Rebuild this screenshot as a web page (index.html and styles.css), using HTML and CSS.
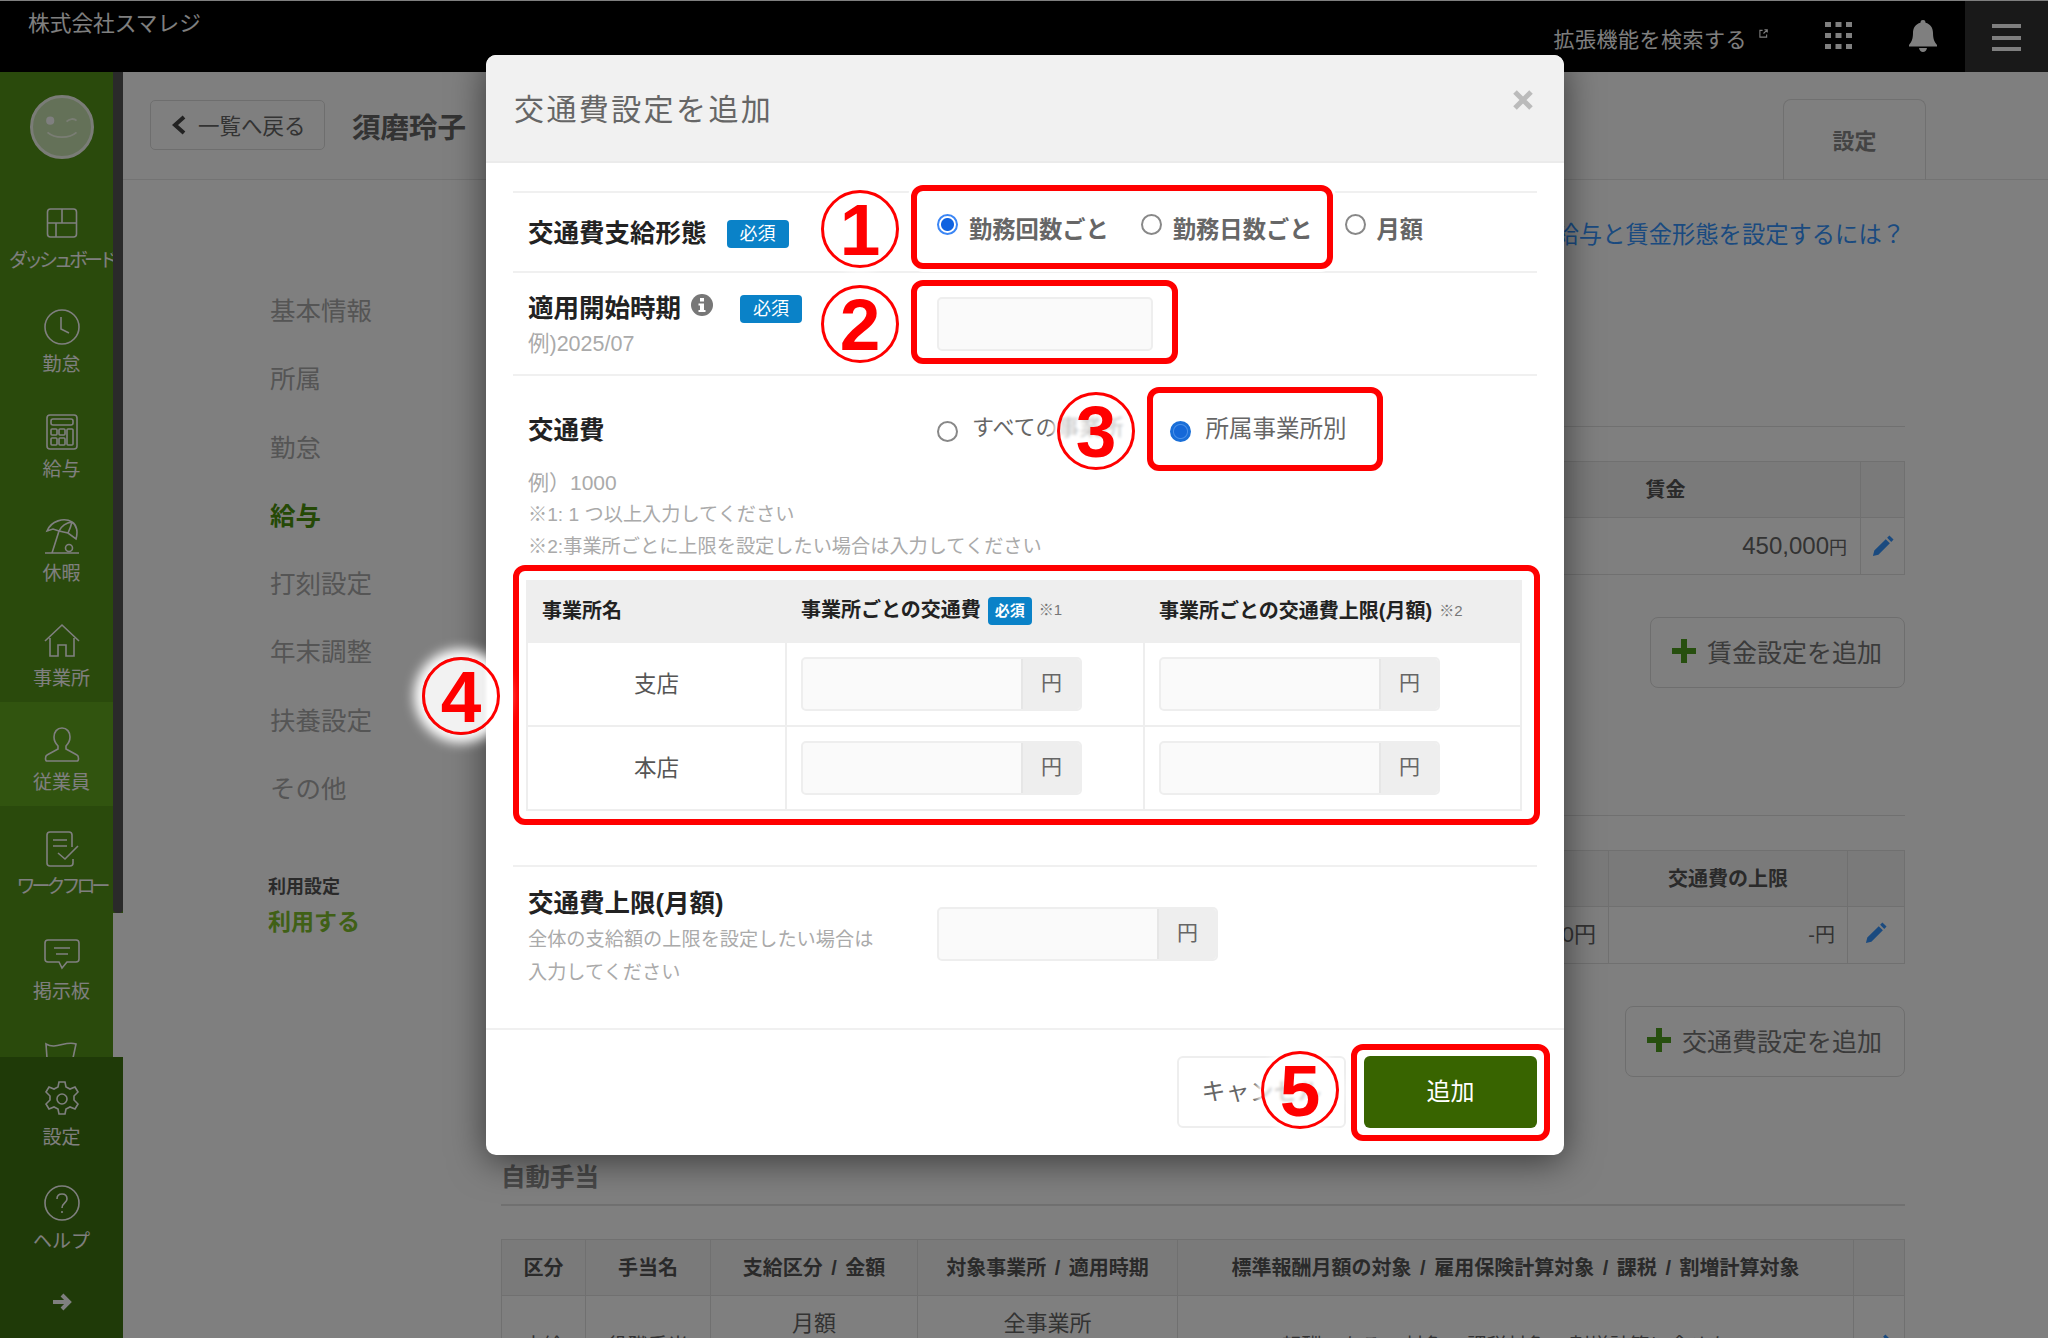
FILE: index.html
```html
<!DOCTYPE html>
<html lang="ja">
<head>
    <meta charset="UTF-8">
    <title>交通費設定を追加</title>
    <link rel="stylesheet" href="styles.css">
</head>
<body>
<div class="app">
    <header class="topbar">
        <div class="company">株式会社スマレジ</div>
        <div class="ext-search">拡張機能を検索する</div>
        <svg class="ext-icon" viewBox="0 0 10 10"><path d="M4 1.500H1v7.500h7.500V6M5 5l4-4M6 .8h3.200V4"/></svg>
        <svg class="grid-icon" viewBox="0 0 27 27"><rect x="0" y="0" width="6" height="5"/><rect x="10.500" y="0" width="6" height="5"/><rect x="21" y="0" width="6" height="5"/><rect x="0" y="11" width="6" height="5"/><rect x="10.500" y="11" width="6" height="5"/><rect x="21" y="11" width="6" height="5"/><rect x="0" y="22" width="6" height="5"/><rect x="10.500" y="22" width="6" height="5"/><rect x="21" y="22" width="6" height="5"/></svg>
        <svg class="bell-icon" viewBox="0 0 28 32"><path d="M14 0a2.500 2.500 0 0 1 2.500 2.800C21.500 4 24 8 24 13c0 6 1.500 9 4 12v1.500H0V25c2.500-3 4-6 4-12 0-5 2.500-9 7.500-10.200A2.500 2.500 0 0 1 14 0zM10 28h8c-.5 2.500-2 4-4 4s-3.500-1.500-4-4z"/></svg>
        <div class="menu-btn"><span></span><span></span><span></span></div>
    </header>

    <div class="main">
        <aside class="sidebar">
            <div class="side-top"><div class="avatar">
                <svg viewBox="0 0 64 64"><circle cx="19" cy="25" r="4.500"/><path class="line" d="M37 26c3-3 8-4 11-1M16 38c8 7 24 7 32 0"/></svg>
            </div></div>
            <nav class="side-nav">
                <a class="side-item">
                    <svg viewBox="0 0 36 36"><rect x="3.500" y="4" width="29" height="28" rx="3"/><path d="M3.500 18h29M18 4v14M12 18v14"/></svg>
                    <span class="tight">ダッシュボード</span>
                </a>
                <a class="side-item">
                    <svg viewBox="0 0 36 36"><circle cx="18" cy="18" r="17"/><path d="M17 8v12l8 4"/></svg>
                    <span>勤怠</span>
                </a>
                <a class="side-item">
                    <svg viewBox="0 0 36 36"><rect x="3" y="1" width="30" height="34" rx="3"/><rect x="7" y="5" width="22" height="6" rx="2"/><rect x="7" y="15" width="6" height="6" rx="1"/><rect x="15" y="15" width="6" height="6" rx="1"/><rect x="23" y="15" width="6" height="16" rx="1"/><rect x="7" y="24" width="6" height="7" rx="1"/><rect x="15" y="24" width="6" height="7" rx="1"/></svg>
                    <span>給与</span>
                </a>
                <a class="side-item">
                    <svg viewBox="0 0 36 36"><path d="M1 35h34M3 13C7 3 20-1 28 4c5 3 6 10 4 17l-8-6-9-2-6-2zM15 13l-7 22M24 15c2-4 3-7 4-11M15 13c2-4 6-8 13-9"/><circle cx="25" cy="30" r="3.500"/></svg>
                    <span>休暇</span>
                </a>
                <a class="side-item">
                    <svg viewBox="0 0 36 36"><path d="M1 18L18 2l17 16M6 15v18h8V22h8v11h8V15"/></svg>
                    <span>事業所</span>
                </a>
                <a class="side-item active">
                    <svg viewBox="0 0 36 36"><path d="M18 1c5 0 8 4 8 9 0 4-2 7-4 9v3l11 6c2 1 2 6 0 6H3c-2 0-2-5 0-6l11-6v-3c-2-2-4-5-4-9 0-5 3-9 8-9z"/></svg>
                    <span>従業員</span>
                </a>
                <a class="side-item">
                    <svg viewBox="0 0 36 36"><path d="M28 16V4a3 3 0 0 0-3-3H6a3 3 0 0 0-3 3v28a3 3 0 0 0 3 3h20a3 3 0 0 0 3-3v-4M9 9h14M9 15h14M14 22l7 6 13-13"/></svg>
                    <span class="tight">ワークフロー</span>
                </a>
                <a class="side-item">
                    <svg viewBox="0 0 36 36"><path d="M4 4h28a3 3 0 0 1 3 3v16a3 3 0 0 1-3 3H23l-5 6-3-6H4a3 3 0 0 1-3-3V7a3 3 0 0 1 3-3zM10 12h16M12 18h12"/></svg>
                    <span>掲示板</span>
                </a>
                <a class="side-item">
                    <svg viewBox="0 0 36 36"><path d="M2 4c10 6 20-4 30 0l-3 14 3 14c-10-4-20 6-28 0z"/></svg>
                </a>
            </nav>
            <div class="side-foot">
                <a class="side-item">
                    <svg viewBox="0 0 36 36"><path d="M15 1h6l1 5 4 2 5-2 3 5-4 4v4l4 4-3 5-5-2-4 2-1 5h-6l-1-5-4-2-5 2-3-5 4-4v-4l-4-4 3-5 5 2 4-2z"/><circle cx="18" cy="18" r="5"/></svg>
                    <span>設定</span>
                </a>
                <a class="side-item">
                    <svg viewBox="0 0 36 36"><circle cx="18" cy="18" r="17"/><path d="M13 14c0-3 2-5 5-5s5 2 5 5c0 4-5 4-5 9M18 26v2"/></svg>
                    <span>ヘルプ</span>
                </a>
                <div class="side-arrow">
                    <svg viewBox="0 0 20 20"><path d="M1 10h15M10 3l7 7-7 7"/></svg>
                </div>
            </div>
            <div class="side-scroll"></div>
        </aside>

        <div class="content">
            <div class="page-head">
                <a class="back-btn">
                    <svg viewBox="0 0 14 20"><path d="M12 2L3 10l9 8"/></svg>
                    一覧へ戻る
                </a>
                <h1 class="staff-name">須磨玲子</h1>
                <div class="page-tab">設定</div>
            </div>

            <div class="page-body">
                <div class="subnav">
                    <a class="subnav-item">基本情報</a>
                    <a class="subnav-item">所属</a>
                    <a class="subnav-item">勤怠</a>
                    <a class="subnav-item current">給与</a>
                    <a class="subnav-item">打刻設定</a>
                    <a class="subnav-item">年末調整</a>
                    <a class="subnav-item">扶養設定</a>
                    <a class="subnav-item">その他</a>
                    <div class="use-label">利用設定</div>
                    <div class="use-value">利用する</div>
                </div>

                <div class="panel">
                    <div class="help-link">給与と賃金形態を設定するには？</div>

                    <section class="block first">
                        <table class="data wage-table">
                            <colgroup><col><col class="col-wage"><col class="col-edit-44"></colgroup>
                            <thead><tr><th></th><th>賃金</th><th></th></tr></thead>
                            <tbody><tr>
                                <td></td>
                                <td class="num wage">450,000<small>円</small></td>
                                <td class="edit"><svg class="pencil" viewBox="0 0 24 24"><path d="M1 23l1.500-6L15 4.500l4.500 4.500L7 21.500zM16.500 3L19 .5 23.500 5 21 7.500z"/></svg></td>
                            </tr></tbody>
                        </table>
                        <div class="btn-row"><a class="add-btn wide-1"><span class="plus"></span>賃金設定を追加</a></div>
                    </section>

                    <section class="block">
                        <table class="data fee-table">
                            <colgroup><col><col class="col-limit"><col class="col-edit-56"></colgroup>
                            <thead><tr><th></th><th>交通費の上限</th><th></th></tr></thead>
                            <tbody><tr>
                                <td class="num fee-sum">0円</td>
                                <td class="num small-yen">-円</td>
                                <td class="edit"><svg class="pencil" viewBox="0 0 24 24"><path d="M1 23l1.500-6L15 4.500l4.500 4.500L7 21.500zM16.500 3L19 .5 23.500 5 21 7.500z"/></svg></td>
                            </tr></tbody>
                        </table>
                        <div class="btn-row"><a class="add-btn wide-2"><span class="plus"></span>交通費設定を追加</a></div>
                    </section>

                    <h2 class="block-title">自動手当</h2>
                    <table class="data allowance">
                        <colgroup><col class="a1"><col class="a2"><col class="a3"><col class="a4"><col><col class="a6"></colgroup>
                        <thead><tr>
                            <th>区分</th><th>手当名</th><th>支給区分 / 金額</th><th>対象事業所 / 適用時期</th>
                            <th>標準報酬月額の対象 / 雇用保険計算対象 / 課税 / 割増計算対象</th><th></th>
                        </tr></thead>
                        <tbody><tr>
                            <td>支給</td><td>役職手当</td>
                            <td class="top">月額</td><td class="top">全事業所</td>
                            <td>報酬である / 対象 / 課税対象 / 割増計算に含めない</td>
                            <td class="edit"><svg class="pencil" viewBox="0 0 24 24"><path d="M1 23l1.500-6L15 4.500l4.500 4.500L7 21.500zM16.500 3L19 .5 23.500 5 21 7.500z"/></svg></td>
                        </tr></tbody>
                    </table>
                </div>
            </div>
        </div>
    </div>

    <div class="backdrop"></div>

    <div class="modal">
        <div class="modal-head">
            <h3 class="modal-title">交通費設定を追加</h3>
            <svg class="modal-close" viewBox="0 0 22 22"><path d="M3 3l16 16M19 3L3 19"/></svg>
        </div>
        <div class="modal-body">
            <div class="form-row row-type">
                <div class="form-label"><span class="label-text">交通費支給形態</span><span class="req">必須</span></div>
                <div class="radios">
                    <input class="radio radio-on" type="radio"><label class="radio-text">勤務回数ごと</label>
                    <input class="radio" type="radio"><label class="radio-text">勤務日数ごと</label>
                    <input class="radio" type="radio"><label class="radio-text">月額</label>
                </div>
            </div>
            <div class="form-row row-start">
                <div class="form-label stacked">
                    <div class="label-line">
                        <span class="label-text">適用開始時期</span>
                        <svg class="info-icon" viewBox="0 0 22 22"><circle cx="11" cy="11" r="11"/><rect x="9" y="4" width="4" height="3.500" fill="#fff"/><path d="M7.500 9.500H13V16h1.500v2h-7v-2H9v-4.500H7.500z" fill="#fff"/></svg>
                        <span class="req">必須</span>
                    </div>
                    <div class="hint">例)2025/07</div>
                </div>
                <input class="text-input month" type="text">
            </div>
            <div class="form-row row-fee">
                <div class="fee-top">
                    <div class="form-label"><span class="label-text">交通費</span></div>
                    <input class="radio fee-radio" type="radio"><label class="plain-text">すべての事業所</label>
                    <input class="radio radio-fill fee-radio" type="radio"><label class="plain-text">所属事業所別</label>
                </div>
                <div class="notes">
                    <p class="note-eg">例）1000</p>
                    <p>※1: 1 つ以上入力してください</p>
                    <p>※2:事業所ごとに上限を設定したい場合は入力してください</p>
                </div>
                <table class="office-table">
                    <colgroup><col class="o1"><col class="o2"><col></colgroup>
                    <thead><tr>
                        <th>事業所名</th>
                        <th>事業所ごとの交通費<span class="req mini">必須</span><span class="mark">※1</span></th>
                        <th>事業所ごとの交通費上限(月額)<span class="mark spaced">※2</span></th>
                    </tr></thead>
                    <tbody>
                        <tr>
                            <td class="office">支店</td>
                            <td><div class="yen-group"><input type="text"><span>円</span></div></td>
                            <td><div class="yen-group"><input type="text"><span>円</span></div></td>
                        </tr>
                        <tr>
                            <td class="office">本店</td>
                            <td><div class="yen-group"><input type="text"><span>円</span></div></td>
                            <td><div class="yen-group"><input type="text"><span>円</span></div></td>
                        </tr>
                    </tbody>
                </table>
            </div>
            <div class="form-row row-limit">
                <div class="form-label stacked">
                    <div class="label-line"><span class="label-text">交通費上限(月額)</span></div>
                    <div class="limit-help">全体の支給額の上限を設定したい場合は<br>入力してください</div>
                </div>
                <div class="yen-group limit-group"><input type="text"><span>円</span></div>
            </div>
        </div>
        <div class="modal-foot">
            <button class="btn-cancel">キャンセル</button>
            <button class="btn-add">追加</button>
        </div>
    </div>

    <!-- annotations drawn on top of the screenshot -->
    <div class="mark-box box-1"></div>
    <div class="mark-box box-2"></div>
    <div class="mark-box box-3"></div>
    <div class="mark-box box-4"></div>
    <div class="mark-box box-5"></div>
    <div class="step step-1">1</div>
    <div class="step step-2">2</div>
    <div class="step step-3">3</div>
    <div class="step step-4">4</div>
    <div class="step step-5">5</div>
</div>
</body>
</html>
```
FILE: styles.css
```css
* {
    box-sizing: border-box;
    padding: 0;
    margin: 0;
}

body {
    width: 2048px;
    height: 1338px;
    overflow: hidden;
    background: #fff;
    color: #666;
    font-family: "Liberation Sans", "Noto Sans CJK JP", sans-serif;
}

.app {
    position: relative;
    width: 2048px;
    height: 1338px;
    overflow: hidden;
}

/* top bar */
.topbar {
    display: flex;
    align-items: center;
    height: 72px;
    background: #000;
    border-top: 1px solid #fff;
    color: #fff;
}

.company {
    align-self: flex-start;
    margin: 7px 0 0 28px;
    font-size: 21.700px;
    line-height: 32px;
}

.ext-search {
    margin: 7px 0 0 auto;
    font-size: 21px;
    letter-spacing: .5px;
    line-height: 32px;
}

.ext-icon {
    width: 9px;
    height: 9px;
    margin: 0 0 6px 12px;
    fill: none;
    stroke: #fff;
    stroke-width: 1.200;
}

.grid-icon {
    width: 27px;
    height: 27px;
    margin: 0 0 2px 57px;
    fill: #fff;
}

.bell-icon {
    width: 28px;
    height: 32px;
    margin: 0 0 2px 57px;
    fill: #fff;
}

.menu-btn {
    display: flex;
    flex-direction: column;
    justify-content: space-between;
    width: 83px;
    height: 71px;
    margin-left: 28px;
    padding: 23px 27px 21px 27px;
    background: #333;
}

.menu-btn span {
    display: block;
    height: 4px;
    background: #fff;
}

.main {
    display: flex;
    height: 1266px;
}

/* left green rail */
.sidebar {
    position: relative;
    display: flex;
    flex-direction: column;
    flex: none;
    width: 123px;
    background: #549418;
    color: #fff;
}

.side-top {
    flex: none;
    display: flex;
    justify-content: center;
    height: 108px;
    padding-top: 23px;
}

.avatar {
    width: 64px;
    height: 64px;
    border-radius: 50%;
    background: #c8e2b0;
    border: 3px solid #f4f8ee;
}

.avatar svg {
    display: block;
    width: 58px;
    height: 58px;
    fill: #fff;
}

.avatar .line {
    fill: none;
    stroke: #f4fbe8;
    stroke-width: 2;
}

.side-nav {
    flex: 1;
    overflow: hidden;
}

.side-item {
    display: flex;
    flex-direction: column;
    align-items: center;
    height: 104.400px;
    padding-top: 25px;
    font-size: 19px;
    line-height: 24px;
    white-space: nowrap;
}

.side-item.active {
    background: #62a81f;
}

.side-item svg {
    flex: none;
    width: 36px;
    height: 36px;
    margin-bottom: 8px;
    fill: none;
    stroke: #fff;
    stroke-width: 1.600;
}

.side-item .tight {
    letter-spacing: -4px;
}

.side-foot {
    flex: none;
    height: 281px;
    background: #3e7410;
}

.side-foot .side-item {
    height: 104px;
    padding-top: 24px;
}

.side-foot .side-item svg {
    margin-bottom: 9px;
}

.side-arrow {
    display: flex;
    justify-content: center;
    padding-top: 27px;
}

.side-arrow svg {
    width: 20px;
    height: 20px;
    fill: none;
    stroke: #fff;
    stroke-width: 4;
}

/* scrollbar sits over the rail */
.side-scroll {
    position: absolute;
    top: 0;
    right: 0;
    width: 10px;
    height: 841px;
    background: #555;
    border-radius: 0 0 4px 4px;
}

.sidebar::after {
    content: "";
    position: absolute;
    top: 841px;
    right: 0;
    width: 10px;
    height: 144px;
    background: #fff;
}

/* page content */
.content {
    flex: 1;
    min-width: 0;
}

.page-head {
    display: flex;
    align-items: center;
    height: 108px;
    padding: 0 122px 0 27px;
    border-bottom: 1px solid #e6e6e6;
}

.back-btn {
    display: flex;
    align-items: center;
    width: 175px;
    height: 50px;
    margin-bottom: 2px;
    padding-left: 21px;
    border: 1px solid #ddd;
    border-radius: 5px;
    color: #666;
    font-size: 21.500px;
}

.back-btn svg {
    width: 14px;
    height: 20px;
    margin-right: 12px;
    fill: none;
    stroke: #444;
    stroke-width: 4;
}

.staff-name {
    margin-left: 27px;
    font-size: 28.500px;
    color: #666;
}

.page-tab {
    align-self: flex-end;
    width: 143px;
    height: 81px;
    margin-bottom: -1px;
    margin-left: auto;
    border: 1px solid #e0e0e0;
    border-bottom: none;
    border-radius: 8px 8px 0 0;
    color: #888;
    font-size: 22px;
    font-weight: 700;
    line-height: 83px;
    text-align: center;
}

.page-body {
    display: flex;
}

.subnav {
    flex: none;
    width: 378px;
    padding: 97px 0 0 147px;
}

.subnav-item {
    display: block;
    color: #aaa;
    font-size: 25.500px;
    line-height: 68.300px;
}

.subnav-item.current {
    color: #4a920c;
    font-weight: 700;
}

.use-label {
    margin: 52px 0 0 -2px;
    color: #555;
    font-size: 18px;
    font-weight: 700;
    line-height: 24px;
}

.use-value {
    margin: 8px 0 0 -2px;
    color: #80c02c;
    font-size: 23px;
    font-weight: 700;
    line-height: 30px;
}

.panel {
    flex: none;
    width: 1404px;
}

.help-link {
    margin-top: 35px;
    color: #3594ff;
    font-size: 23.300px;
    line-height: 40px;
    text-align: right;
}

.block {
    margin-top: 127px;
    padding-top: 34px;
    border-top: 1px solid #e0e0e0;
}

.block.first {
    margin-top: 171px;
}

.data {
    width: 100%;
    border-collapse: collapse;
    table-layout: fixed;
}

.data th,
.data td {
    border: 1px solid #e0e0e0;
    text-align: center;
}

.data th {
    height: 56px;
    padding-bottom: 3px;
    background: #f5f5f5;
    color: #555;
    font-size: 20px;
    word-spacing: 3px;
}

.data td {
    height: 57px;
    color: #666;
    font-size: 22px;
    word-spacing: 3px;
}

.data td.num {
    padding-right: 12px;
    text-align: right;
}

.data td.wage {
    padding-right: 13px;
    font-size: 24px;
}

.wage small {
    font-size: 18px;
}

.fee-table td {
    padding-bottom: 4px;
}

.fee-table td.fee-sum {
    padding-bottom: 7px;
}

.data td.small-yen {
    font-size: 20px;
}

.col-wage {
    width: 390px;
}

.col-edit-44 {
    width: 44px;
}

.col-limit {
    width: 239px;
}

.col-edit-56 {
    width: 57px;
}

.pencil {
    display: block;
    width: 22px;
    height: 22px;
    margin: 0 auto;
    fill: #3594ff;
}

.btn-row {
    display: flex;
    justify-content: flex-end;
    margin-top: 42px;
}

.add-btn {
    display: flex;
    align-items: center;
    height: 71px;
    padding: 0 0 3px 21px;
    border: 1px solid #ddd;
    border-radius: 8px;
    color: #777;
    font-size: 25px;
}

.wide-1 {
    width: 255px;
}

.wide-2 {
    width: 280px;
}

.plus {
    position: relative;
    flex: none;
    width: 24px;
    height: 24px;
    margin-right: 11px;
}

.plus::before,
.plus::after {
    content: "";
    position: absolute;
    background: #4f9e1f;
}

.plus::before {
    left: 0;
    top: 9px;
    width: 24px;
    height: 6px;
}

.plus::after {
    left: 9px;
    top: 0;
    width: 6px;
    height: 24px;
}

.block-title {
    margin-top: 81px;
    padding-bottom: 6px;
    border-bottom: 2px solid #e0e0e0;
    color: #909090;
    font-size: 24.500px;
    line-height: 40px;
}

.allowance {
    margin-top: 33px;
}

.allowance .a1 { width: 84px; }
.allowance .a2 { width: 125px; }
.allowance .a3 { width: 207px; }
.allowance .a4 { width: 260px; }
.allowance .a6 { width: 51px; }

.allowance td {
    height: 98px;
    font-size: 20px;
}

.allowance td.top {
    padding-top: 12px;
    font-size: 22px;
    line-height: 32px;
    vertical-align: top;
}

/* dim layer */
.backdrop {
    position: absolute;
    inset: 0;
    background: rgba(0, 0, 0, .5);
}

/* modal */
.modal {
    position: absolute;
    left: 486px;
    top: 55px;
    display: flex;
    flex-direction: column;
    width: 1078px;
    height: 1100px;
    background: #fff;
    border-radius: 10px;
    box-shadow: 0 6px 36px rgba(0, 0, 0, .55);
    overflow: hidden;
}

.modal-head {
    flex: none;
    display: flex;
    justify-content: space-between;
    height: 108px;
    padding: 0 30px 0 28px;
    background: #f1f1f1;
    border-bottom: 2px solid #ebebeb;
}

.modal-title {
    color: #666;
    font-size: 30px;
    font-weight: 400;
    letter-spacing: 2.400px;
    line-height: 110px;
}

.modal-close {
    width: 22px;
    height: 22px;
    margin-top: 34px;
    fill: none;
    stroke: #bbb;
    stroke-width: 5;
}

.modal-body {
    flex: 1;
    min-height: 0;
    padding: 28px 27px 0 27px;
}

.form-row {
    border-top: 2px solid #f0f0f0;
}

.form-label {
    display: flex;
    align-items: center;
    flex: none;
    width: 424px;
    padding-left: 15px;
}

.form-label.stacked {
    display: block;
}

.label-text {
    color: #222;
    font-size: 25.500px;
    font-weight: 700;
}

.label-line {
    display: flex;
    align-items: center;
    height: 36px;
}

.req {
    flex: none;
    width: 62px;
    height: 28px;
    border-radius: 4px;
    background: #0a82c8;
    color: #fff;
    font-size: 18px;
    line-height: 28px;
    text-align: center;
}

.row-type {
    display: flex;
    align-items: center;
    height: 80px;
}

.row-type .form-label {
    padding-bottom: 4px;
}

.row-type .req {
    margin: 7px 0 0 20px;
}

.radios {
    display: flex;
    align-items: center;
    padding-bottom: 5px;
}

.radio {
    appearance: none;
    flex: none;
    width: 21px;
    height: 21px;
    border: 2px solid #888;
    border-radius: 50%;
    background: #fff;
}

.radios .radio {
    margin-bottom: 10px;
}

.radio-on {
    border-color: #3b86f5;
    background: radial-gradient(circle, #0f62e0 6px, #fff 7px);
}

.radio-fill {
    border-color: #1a6fd8;
    background: radial-gradient(circle, #1568d8 6px, #4a8fe8 7px, #1a6fd8 8px);
}

.radio-text {
    margin: 0 32px 0 11px;
    color: #666;
    font-size: 23.300px;
    font-weight: 700;
    line-height: 32px;
}

.row-start {
    display: flex;
    align-items: center;
    height: 103px;
}

.row-start .stacked {
    align-self: flex-start;
    padding-top: 14px;
}

.info-icon {
    width: 22px;
    height: 22px;
    margin-left: 10px;
    fill: #777;
}

.row-start .req {
    margin: 8px 0 0 27px;
}

.hint {
    margin-top: 3px;
    color: #aaa;
    font-size: 21.500px;
    line-height: 36px;
}

.text-input {
    height: 54px;
    border: 2px solid #eee;
    border-radius: 5px;
    background: #fafafa;
}

.month {
    width: 216px;
    margin-top: 0;
}

.fee-top {
    display: flex;
    align-items: center;
    height: 40px;
    margin-top: 32px;
}

.fee-top .form-label {
    padding-bottom: 2px;
}

.fee-radio {
    margin-top: 7px;
}

.plain-text {
    color: #666;
    font-size: 22px;
    line-height: 32px;
    white-space: nowrap;
}

.fee-radio + .plain-text {
    margin: 0 45px 0 14px;
}

.radio-fill {
    margin-left: 1px;
}

.radio-fill + .plain-text {
    margin: 2px 0 0 15px;
    font-size: 23.500px;
}

.notes {
    margin: 19px 0 0 15px;
    color: #aaa;
    font-size: 19.200px;
    line-height: 32px;
}

.note-eg {
    font-size: 21px;
}

.office-table {
    width: 996px;
    margin: 17px 0 54px 13px;
    border-collapse: collapse;
    table-layout: fixed;
}

.office-table .o1 {
    width: 259px;
}

.office-table .o2 {
    width: 358px;
}

.office-table th,
.office-table td {
    border: 2px solid #eee;
}

.office-table th {
    height: 61px;
    padding-left: 14px;
    padding-bottom: 5px;
    background: #eee;
    color: #222;
    font-size: 20px;
    text-align: left;
    white-space: nowrap;
}

.office-table th + th {
    border-left-color: #e4e4e4;
}

.office-table td {
    height: 84px;
    padding-left: 14px;
}

.office-table td.office {
    padding: 0 0 4px 0;
    color: #555;
    font-size: 22.500px;
    text-align: center;
}

.req.mini {
    display: inline-block;
    width: 44px;
    height: 28px;
    margin: 0 7px;
    font-size: 15px;
    font-weight: 700;
    vertical-align: 1px;
}

.mark {
    color: #777;
    font-size: 15px;
    font-weight: 400;
    vertical-align: 2px;
}

.mark.spaced {
    margin-left: 7px;
}

.yen-group {
    display: flex;
    width: 281px;
    height: 54px;
    border: 2px solid #eee;
    border-radius: 5px;
    background: #fafafa;
    overflow: hidden;
}

.yen-group input {
    flex: 1;
    min-width: 0;
    border: none;
    background: none;
}

.yen-group span {
    flex: none;
    width: 59px;
    border-left: 2px solid #e6e6e6;
    background: #eee;
    color: #666;
    font-size: 21px;
    line-height: 48px;
    text-align: center;
}

.row-limit {
    display: flex;
    height: 162px;
}

.row-limit .stacked {
    padding-top: 15px;
}

.limit-help {
    margin-top: 6px;
    color: #aaa;
    font-size: 19.200px;
    line-height: 32.500px;
}

.limit-group {
    margin-top: 40px;
}

.modal-foot {
    flex: none;
    display: flex;
    justify-content: flex-end;
    gap: 18px;
    height: 127px;
    padding: 26px 27px 0 0;
    border-top: 2px solid #f0f0f0;
}

.btn-cancel,
.btn-add {
    height: 72px;
    padding-bottom: 5px;
    border-radius: 6px;
    font-family: inherit;
    font-size: 24px;
}

.btn-cancel {
    width: 169px;
    border: 2px solid #eee;
    background: #fff;
    color: #666;
}

.btn-add {
    width: 173px;
    border: none;
    background: #386400;
    color: #fff;
}

/* red annotations */
.mark-box {
    position: absolute;
    border: 6px solid #f00;
    border-radius: 12px;
    box-shadow: 0 0 0 3px #fff, inset 0 0 0 3px rgba(255, 255, 255, .9);
}

.box-1 { left: 911px; top: 185px; width: 422px; height: 84px; }
.box-2 { left: 911px; top: 280px; width: 267px; height: 84px; }
.box-3 { left: 1147px; top: 387px; width: 236px; height: 84px; }
.box-4 { left: 513px; top: 565px; width: 1027px; height: 260px; box-shadow: none; }
.box-5 { left: 1351px; top: 1044px; width: 199px; height: 97px; box-shadow: none; }

.step {
    position: absolute;
    display: flex;
    align-items: center;
    justify-content: center;
    width: 78px;
    height: 78px;
    border: 3px solid #f00;
    border-radius: 50%;
    background: rgba(255, 255, 255, .62);
    backdrop-filter: blur(1.500px);
    box-shadow: 0 0 6px 4px #fff;
    color: #f00;
    font-family: "Liberation Sans", sans-serif;
    font-size: 73px;
    font-weight: 700;
    line-height: 1;
}

.step-1 { left: 821px; top: 190px; }
.step-2 { left: 821px; top: 285px; }
.step-3 { left: 1057px; top: 392px; }
.step-4 { left: 422px; top: 657px; box-shadow: 0 0 12px 8px #fff; background: rgba(255, 255, 255, .9); }
.step-5 { left: 1261px; top: 1051px; }
```
